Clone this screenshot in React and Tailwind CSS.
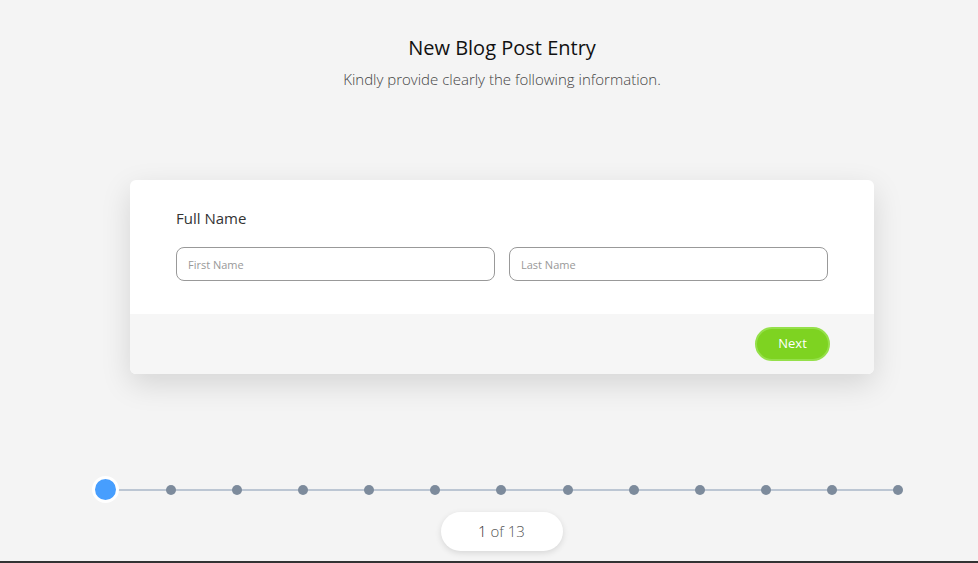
import React from 'react';

const font = { fontFamily: '"Open Sans", "Noto Sans", sans-serif' };

function Stepper({ total = 13, current = 1 }) {
  const items = Array.from({ length: total }, (_, i) => i + 1);
  return (
    <div className="flex items-center h-[27px]">
      {items.map((n, i) => (
        <React.Fragment key={n}>
          {i > 0 && <div className="flex-1 h-[2px] bg-[#bcc6d3]" />}
          <div className="w-0 flex justify-center relative z-10">
            {n === current ? (
              <div className="w-[27px] h-[27px] rounded-full bg-[#479efe] border-[3px] border-white shrink-0" />
            ) : (
              <div className="w-[10px] h-[10px] rounded-full bg-[#7d8b9c] shrink-0" />
            )}
          </div>
        </React.Fragment>
      ))}
    </div>
  );
}

export default function App() {
  return (
    <div className="w-full h-[563px] bg-[#f4f4f4] flex flex-col overflow-hidden" style={font}>
      {/* Header */}
      <header className="text-center pt-[35px] pl-[26px]">
        <h1 className="text-[20px] leading-[26px] font-medium text-[#111]">New Blog Post Entry</h1>
        <p className="mt-[8px] text-[15px] leading-[20px] font-light text-[#444]">
          Kindly provide clearly the following information.
        </p>
      </header>

      {/* Card */}
      <div className="mt-[91px] ml-[130px] mr-[104px] bg-white rounded-[6px] shadow-[0_10px_30px_rgba(0,0,0,0.13)] overflow-hidden">
        <div className="px-[46px] pt-[28px] pb-[33px]">
          <label className="block text-[15px] leading-[20px] text-[#333]">Full Name</label>
          <div className="mt-[19px] grid grid-cols-2 gap-[14px]">
            <input
              placeholder="First Name"
              className="h-[34px] rounded-[8px] border border-[#999] px-[11px] text-[11px] text-[#333] placeholder:text-[#999] outline-none bg-white"
              style={font}
            />
            <input
              placeholder="Last Name"
              className="h-[34px] rounded-[8px] border border-[#999] px-[11px] text-[11px] text-[#333] placeholder:text-[#999] outline-none bg-white"
              style={font}
            />
          </div>
        </div>
        <div className="bg-[#f6f6f6] h-[60px] flex items-center justify-end pr-[44px]">
          <button
            className="w-[75px] h-[34px] rounded-full bg-[#7ed321] border-2 border-[#95e04a] text-white text-[13px]"
            style={font}
          >
            Next
          </button>
        </div>
      </div>

      {/* Progress */}
      <div className="mt-[102px] ml-[105px] mr-[80px]">
        <Stepper total={13} current={1} />
        <div className="flex justify-center mt-[9px]">
          <div className="w-[122px] h-[39px] rounded-full bg-white shadow-[0_2px_6px_rgba(0,0,0,0.12)] flex items-center justify-center text-[15px] font-light text-[#555]">
            <span className="text-[#333]">1</span>&nbsp;of 13
          </div>
        </div>
      </div>
      <div className="mt-auto h-[2px] bg-[#333]" />
    </div>
  );
}
